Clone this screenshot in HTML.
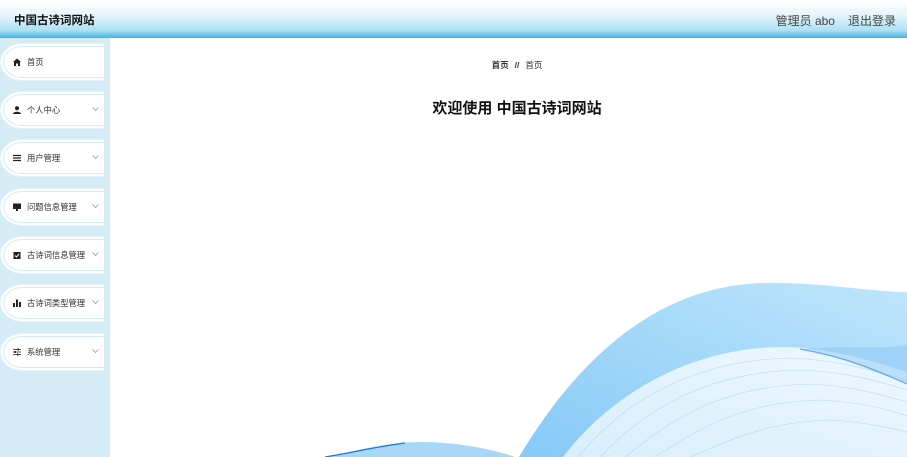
<!DOCTYPE html>
<html><head><meta charset="utf-8"><style>
*{margin:0;padding:0;box-sizing:border-box}
body{width:907px;height:457px;overflow:hidden;background:#fff;font-family:"Liberation Sans","Noto Sans CJK SC",sans-serif;position:relative}
.hd{position:absolute;left:0;top:0;width:907px;height:38px;background:linear-gradient(#fff 0%,#e6f5fb 40%,#ade0f4 80%,#3db4e6 100%)}
.hd .t{position:absolute;left:14px;top:12px;font-size:11.5px;font-weight:bold;color:#111}
.hd .r{position:absolute;right:11px;top:12px;font-size:12px;color:#444}
.hd .r span{margin-left:13px}
.sb{position:absolute;left:0;top:38px;width:110px;height:419px;background:#d5ebf6}
.it{position:absolute;left:0;width:104px;height:38px;background:#fff;border:1px solid #e8f4fb;border-right:none;border-radius:22px 0 0 22px / 19px 0 0 19px}
.it:before{content:"";position:absolute;left:2px;top:2px;right:0;bottom:2px;border:1px solid #d3eaf7;border-right:none;border-radius:19px 0 0 19px / 16px 0 0 16px}
.it .ic{position:absolute;left:12px;top:14px;width:8px;height:8px}
.it .tx{position:absolute;left:26px;top:12px;font-size:8.3px;color:#333}
.it svg.ar{position:absolute;left:91px;top:15px;width:7px;height:4px}
.bc{position:absolute;left:0;width:1034px;text-align:center;top:59px;font-size:8.5px;color:#333}
.bc b{font-weight:bold;margin:0 6px}
.wl{position:absolute;left:0;width:1034px;text-align:center;top:97px;font-size:15px;font-weight:bold;color:#111}
</style></head><body>
<svg style="position:absolute;left:0;top:0" width="907" height="457">
<defs>
<linearGradient id="g1" x1="0" y1="1" x2="1" y2="0"><stop offset="0" stop-color="#86c9f7"/><stop offset="1" stop-color="#bfe6fb"/></linearGradient>
<linearGradient id="g2" x1="0" y1="1" x2="1" y2="0"><stop offset="0" stop-color="#d9eefc"/><stop offset="1" stop-color="#eef8fd"/></linearGradient>
</defs>
<path d="M519 457 C580 355 660 285 765 283 C820 282 870 292 907 292 L907 457 Z" fill="url(#g1)"/>
<path d="M563 457 C610 395 690 347 784 347 C830 348 870 360 907 372 L907 457 Z" fill="url(#g2)"/>
<g fill="none" stroke="#a9d7f6" stroke-width="0.6" opacity="0.85">
<path d="M578 457 C620 405 690 360 790 358 C840 360 870 370 907 380"/>
<path d="M600 457 C640 415 700 372 800 370 C850 372 880 382 907 390"/>
<path d="M625 457 C665 425 715 386 810 384 C855 386 885 396 907 402"/>
<path d="M655 457 C690 435 735 402 820 400 C860 402 890 410 907 416"/>
<path d="M690 457 C720 445 760 422 830 420 C865 422 890 428 907 432"/>
</g>
<path d="M800 349 C850 345 880 350 907 345 L907 384 C870 370 840 356 800 349Z" fill="#8cc6f5" opacity="0.5"/>
<path d="M800 349 C850 358 880 372 907 384" stroke="#3d8ff0" stroke-width="1.2" fill="none" opacity="0.7"/>
<path d="M325 457 C360 450 390 442 420 442 C460 442 495 450 515 457 Z" fill="#a8d8f7"/>
<path d="M325 457 C355 452 380 446 405 443" stroke="#1a73e8" stroke-width="1.3" fill="none"/>
</svg>
<div class="hd"><div class="t">中国古诗词网站</div><div class="r">管理员 abo<span>退出登录</span></div></div>
<div class="sb"></div>
<div class="it" style="top:43px"><svg class="ic" viewBox="0 0 8 8"><path d="M4 0.5 L8 4 L7 4 L7 8 L5 8 L5 5.5 L3 5.5 L3 8 L1 8 L1 4 L0 4Z" fill="#222"/></svg><div class="tx">首页</div></div>
<div class="it" style="top:91px"><svg class="ic" viewBox="0 0 8 8"><circle cx="4" cy="2.2" r="2" fill="#222"/><path d="M0 8 C0 5 8 5 8 8Z" fill="#222"/></svg><div class="tx">个人中心</div><svg class="ar" viewBox="0 0 7 4"><path d="M0.5 0.5L3.5 3.5L6.5 0.5" stroke="#999" fill="none" stroke-width="0.8"/></svg></div>
<div class="it" style="top:139px"><svg class="ic" viewBox="0 0 8 8"><path d="M0 1.5H8M0 4H8M0 6.5H8" stroke="#222" stroke-width="1.2"/></svg><div class="tx">用户管理</div><svg class="ar" viewBox="0 0 7 4"><path d="M0.5 0.5L3.5 3.5L6.5 0.5" stroke="#999" fill="none" stroke-width="0.8"/></svg></div>
<div class="it" style="top:188px"><svg class="ic" viewBox="0 0 8 8"><rect x="0" y="0.5" width="8" height="5.5" fill="#222"/><rect x="3" y="6" width="2" height="2" fill="#222"/></svg><div class="tx">问题信息管理</div><svg class="ar" viewBox="0 0 7 4"><path d="M0.5 0.5L3.5 3.5L6.5 0.5" stroke="#999" fill="none" stroke-width="0.8"/></svg></div>
<div class="it" style="top:236px"><svg class="ic" viewBox="0 0 8 8"><rect x="0.5" y="1" width="7" height="7" fill="#222"/><path d="M2 4.5L3.5 6L6 3" stroke="#fff" fill="none"/></svg><div class="tx">古诗词信息管理</div><svg class="ar" viewBox="0 0 7 4"><path d="M0.5 0.5L3.5 3.5L6.5 0.5" stroke="#999" fill="none" stroke-width="0.8"/></svg></div>
<div class="it" style="top:284px"><svg class="ic" viewBox="0 0 8 8"><rect x="0" y="4" width="2" height="4" fill="#222"/><rect x="3" y="0.5" width="2" height="7.5" fill="#222"/><rect x="6" y="3" width="2" height="5" fill="#222"/></svg><div class="tx">古诗词类型管理</div><svg class="ar" viewBox="0 0 7 4"><path d="M0.5 0.5L3.5 3.5L6.5 0.5" stroke="#999" fill="none" stroke-width="0.8"/></svg></div>
<div class="it" style="top:333px"><svg class="ic" viewBox="0 0 8 8"><path d="M0 1.5H8M0 4H8M0 6.5H8" stroke="#222" stroke-width="0.8"/><rect x="4.5" y="0.5" width="1.5" height="2" fill="#222"/><rect x="1.5" y="3" width="1.5" height="2" fill="#222"/><rect x="4" y="5.5" width="1.5" height="2" fill="#222"/></svg><div class="tx">系统管理</div><svg class="ar" viewBox="0 0 7 4"><path d="M0.5 0.5L3.5 3.5L6.5 0.5" stroke="#999" fill="none" stroke-width="0.8"/></svg></div>
<div class="bc"><span style="font-weight:bold">首页</span><b>//</b><span>首页</span></div>
<div class="wl">欢迎使用 中国古诗词网站</div>
</body></html>
